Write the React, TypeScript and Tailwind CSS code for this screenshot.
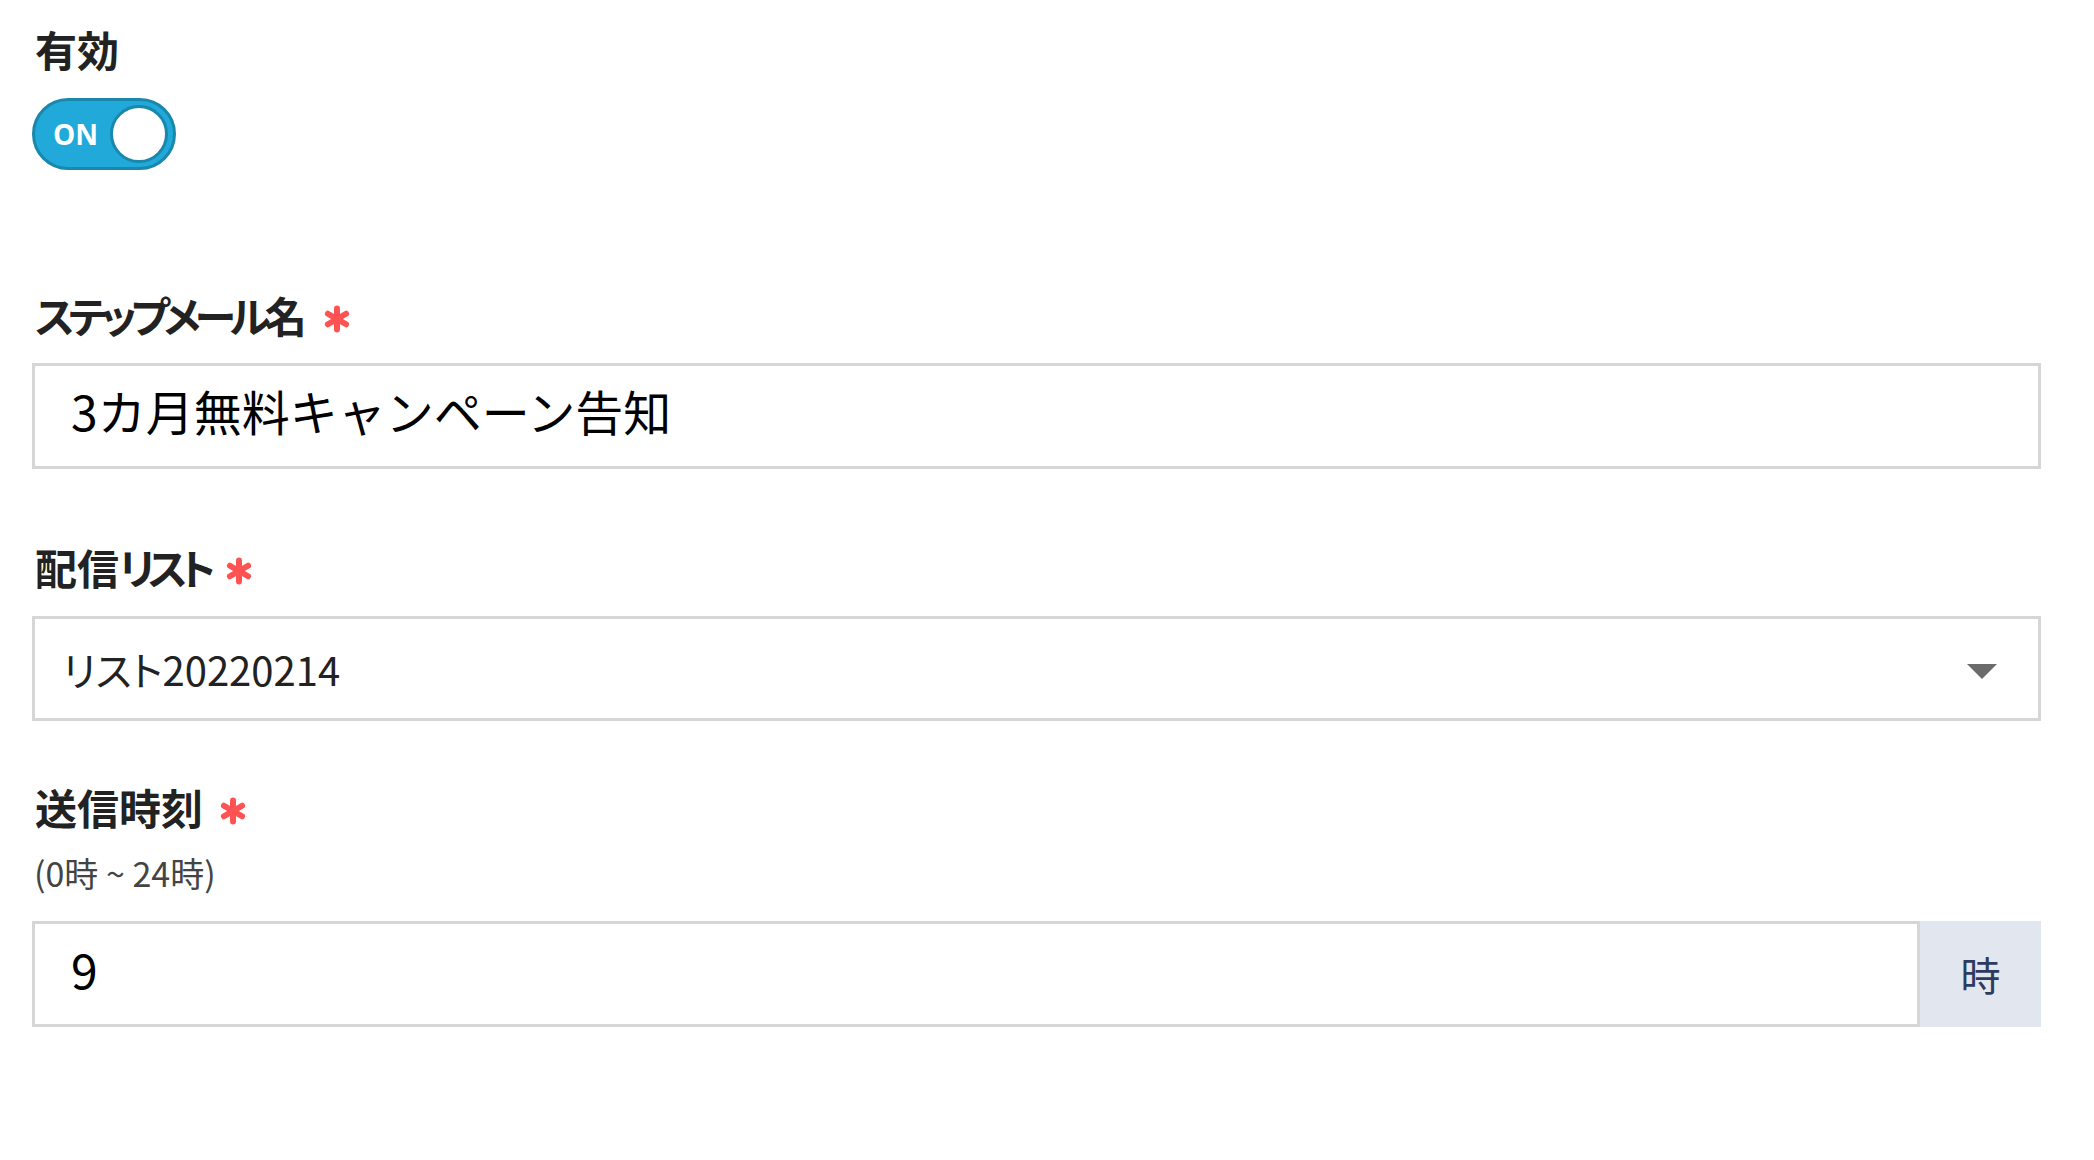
import React from "react";

const FONT = "font-['Noto_Sans_CJK_JP','Noto_Sans',sans-serif]";

function Req() {
  return (
    <svg width="28" height="28" viewBox="0 0 28 28" className="ml-[16px] mt-[8px] shrink-0">
      <g stroke="#ff5252" strokeWidth="6" strokeLinecap="round">
        <line x1="14" y1="3.5" x2="14" y2="24.5" />
        <line x1="4.9" y1="8.75" x2="23.1" y2="19.25" />
        <line x1="4.9" y1="19.25" x2="23.1" y2="8.75" />
      </g>
    </svg>
  );
}

function Label({ children, req }: { children: React.ReactNode; req?: boolean }) {
  return (
    <div className="flex items-center pl-[3px] text-[42px] leading-[50px] font-bold text-[#222] [font-feature-settings:'palt']">
      <span>{children}</span>
      {req && <Req />}
    </div>
  );
}

export default function App() {
  return (
    <div className={`${FONT} w-[2094px] h-[1160px] bg-white pl-8 pr-[53px] pt-[24px]`}>
      <Label>有効</Label>
      <div className="mt-[24px] flex">
        <div className="relative w-[144px] h-[72px] rounded-full bg-[#21a9d9] border-[3px] border-[#1a87ad] flex items-center">
          <span className="pl-[18px] text-white font-bold text-[28px] font-['Open_Sans',sans-serif] leading-none">ON</span>
          <span className="absolute right-[5px] top-[4px] w-[58px] h-[58px] rounded-full bg-white border-[3px] border-[#1a87ad]" />
        </div>
      </div>

      <div className="mt-[120px]">
        <Label req>
          <span className="tracking-[-6px]">ステップメール</span>名
        </Label>
      </div>
      <div className="mt-[23px] h-[106px] border-[3px] border-[#d6d6d6] flex items-center pl-[36px] pb-[12px] text-[48px] text-black">
        3カ月無料キャンペーン告知
      </div>

      <div className="mt-[73px]">
        <Label req>
          配信<span className="tracking-[-7px]">リスト</span>
        </Label>
      </div>
      <div className="mt-[24px] h-[105px] border-[3px] border-[#d6d6d6] flex items-center justify-between pl-[28px] pr-[41px] text-[40px] text-[#222] [font-feature-settings:'palt']">
        <span>リスト20220214</span>
        <svg width="30" height="15" viewBox="0 0 30 15" className="mt-[6px]">
          <polygon points="0,0 30,0 15,15" fill="#6b6b6b" />
        </svg>
      </div>

      <div className="mt-[61px]">
        <Label req>送信時刻</Label>
      </div>
      <div className="mt-[21px] pl-[2px] text-[34px] leading-[40px] text-[#444] whitespace-pre">(0時 ~ 24時)</div>
      <div className="mt-[28px] flex h-[106px]">
        <div className="flex-1 border-[3px] border-[#d6d6d6] flex items-center pl-[36px] pb-[12px] text-[48px] text-black">9</div>
        <div className="w-[121px] bg-[#e2e6ef] flex items-center justify-center text-[40px] text-[#2d3b5e]">時</div>
      </div>
    </div>
  );
}
